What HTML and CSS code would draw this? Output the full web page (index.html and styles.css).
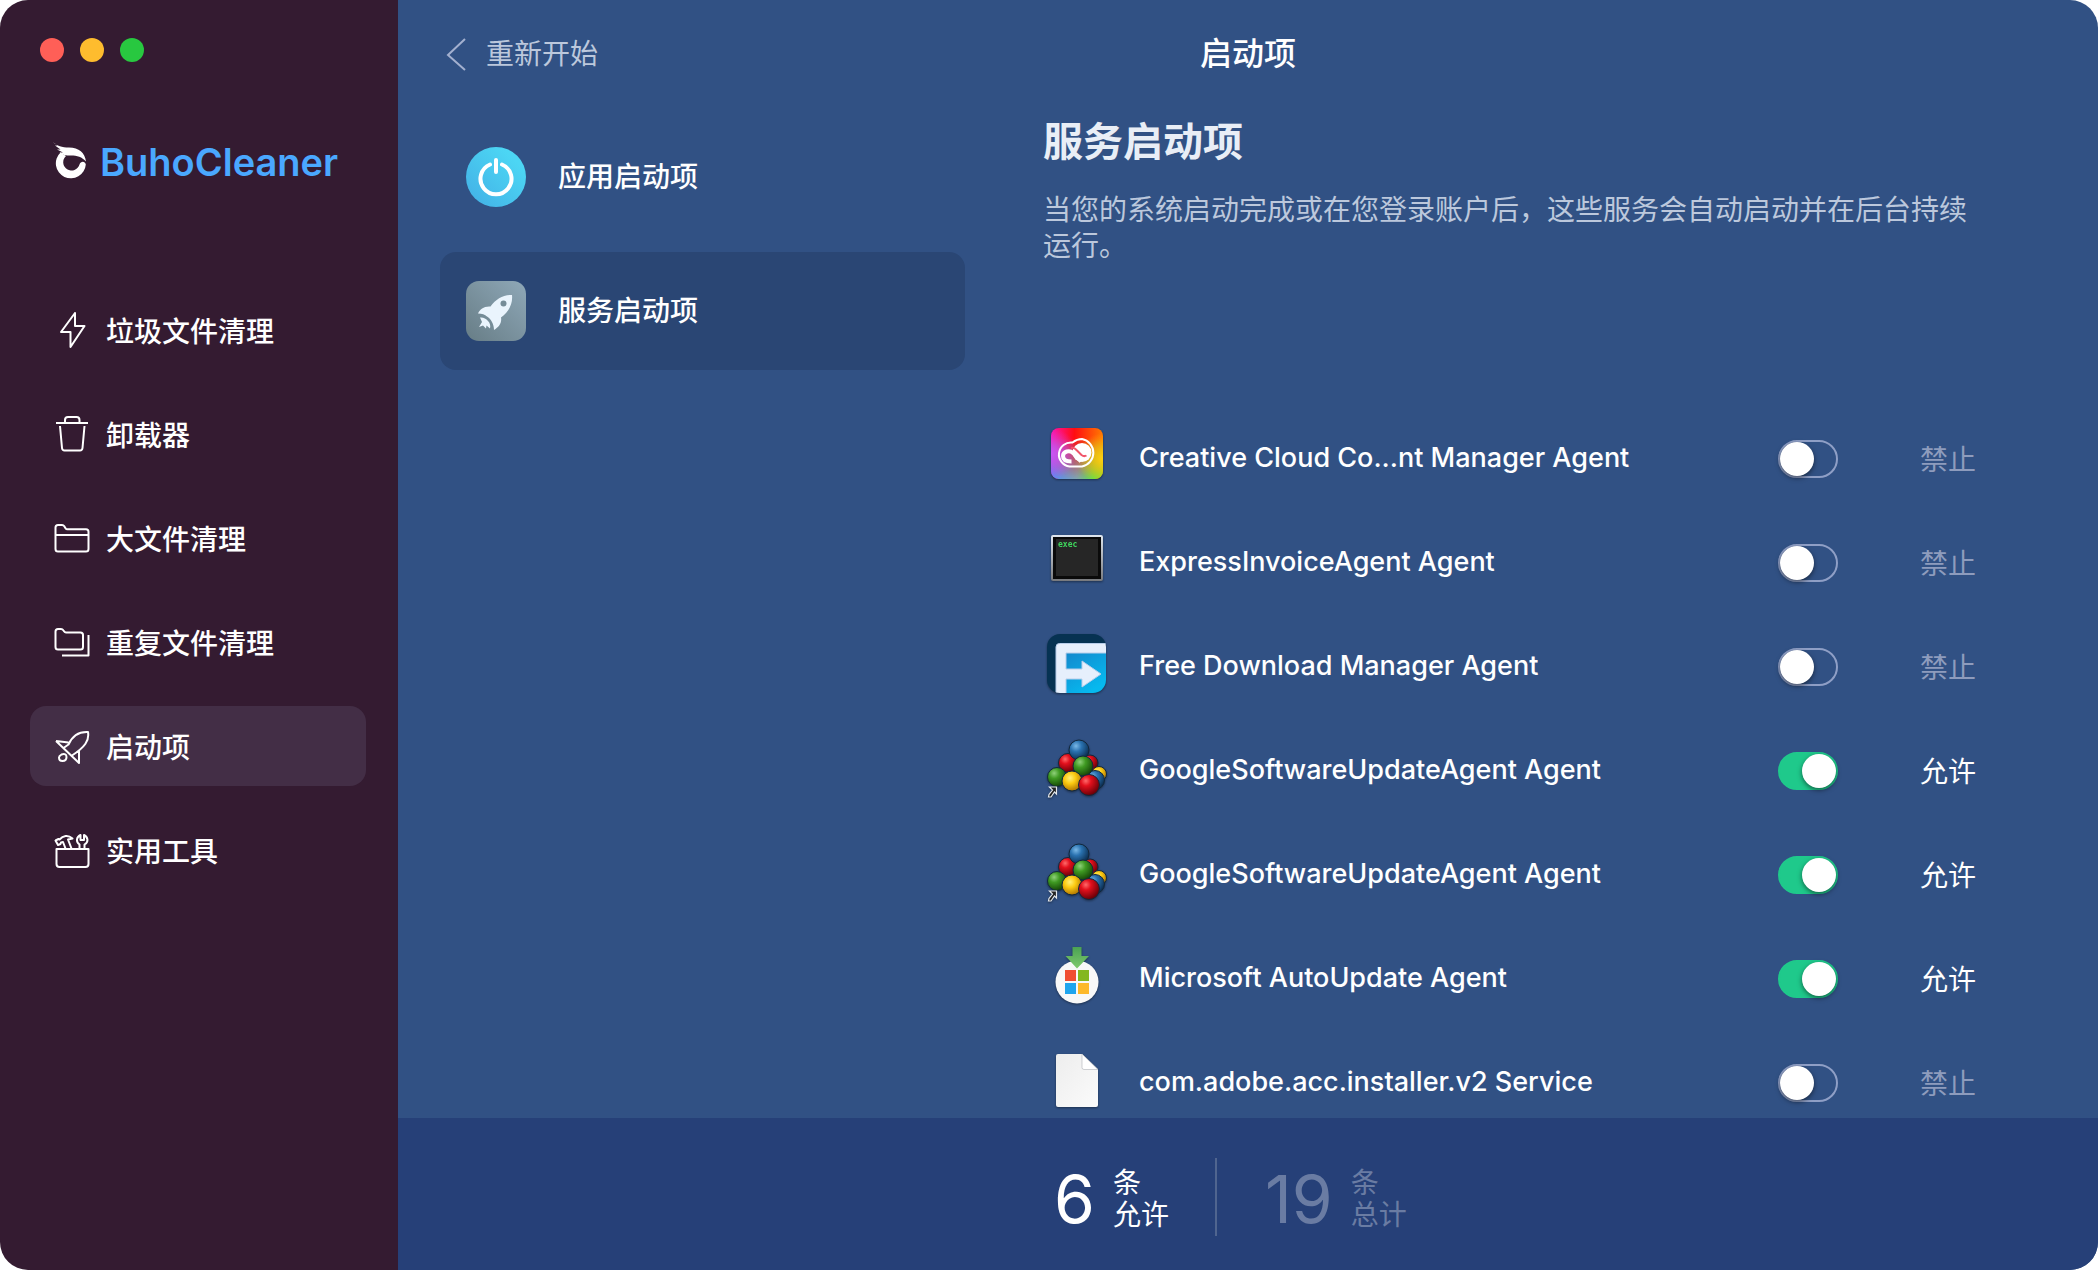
FILE: index.html
```
<!DOCTYPE html>
<html lang="zh-CN">

<head>
  <meta charset="UTF-8">
  <meta name="viewport" content="width=device-width, initial-scale=1.0">
  <title>BuhoCleaner</title>
  <link rel="stylesheet" href="styles.css">
</head>

<body>
  <!-- 图标 -->
  <svg class="sprite" aria-hidden="true">
    <defs>
      <linearGradient id="g-power" x1="1" y1="0" x2="0" y2="1">
        <stop offset="0.2" stop-color="#4cd6f4" />
        <stop offset="1" stop-color="#42aee5" />
      </linearGradient>
      <linearGradient id="g-service" x1="1" y1="0" x2="0" y2="1">
        <stop offset="0" stop-color="#8fa8b8" />
        <stop offset="1" stop-color="#677d86" />
      </linearGradient>
      <radialGradient id="g-red" cx="0.35" cy="0.3" r="0.7">
        <stop offset="0" stop-color="#ff6a6a" />
        <stop offset="0.35" stop-color="#e3101c" />
        <stop offset="1" stop-color="#6d0008" />
      </radialGradient>
      <radialGradient id="g-green" cx="0.35" cy="0.3" r="0.7">
        <stop offset="0" stop-color="#8fd07a" />
        <stop offset="0.4" stop-color="#3f9a22" />
        <stop offset="1" stop-color="#174a08" />
      </radialGradient>
      <radialGradient id="g-blue" cx="0.35" cy="0.3" r="0.7">
        <stop offset="0" stop-color="#7ab8e6" />
        <stop offset="0.4" stop-color="#2a72b0" />
        <stop offset="1" stop-color="#0d3054" />
      </radialGradient>
      <radialGradient id="g-yellow" cx="0.4" cy="0.35" r="0.7">
        <stop offset="0" stop-color="#fff07a" />
        <stop offset="0.4" stop-color="#fccb12" />
        <stop offset="1" stop-color="#a86c00" />
      </radialGradient>
      <linearGradient id="g-frame" x1="0" y1="0" x2="0" y2="1">
        <stop offset="0" stop-color="#dfe6ee" />
        <stop offset="1" stop-color="#77797d" />
      </linearGradient>
      <linearGradient id="g-fdm" x1="0" y1="0" x2="0.6" y2="1">
        <stop offset="0" stop-color="#1681c8" />
        <stop offset="1" stop-color="#06b9ef" />
      </linearGradient>
      <linearGradient id="g-arrow" x1="0" y1="0" x2="0" y2="1">
        <stop offset="0" stop-color="#4aa253" />
        <stop offset="1" stop-color="#7fca6c" />
      </linearGradient>
      <linearGradient id="g-paper" x1="0" y1="0" x2="1" y2="1">
        <stop offset="0" stop-color="#ededed" />
        <stop offset="1" stop-color="#fbfbfb" />
      </linearGradient>
      <linearGradient id="g-cc" x1="0" y1="0" x2="1" y2="0">
        <stop offset="0" stop-color="#ff12b0" />
        <stop offset="0.45" stop-color="#ff0c12" />
        <stop offset="1" stop-color="#ff7a00" />
      </linearGradient>
      <linearGradient id="g-cc-low" x1="0" y1="0" x2="1" y2="0">
        <stop offset="0" stop-color="#4f8dff" />
        <stop offset="0.5" stop-color="#7fa6b0" />
        <stop offset="0.8" stop-color="#5ee04a" />
        <stop offset="1" stop-color="#7be02c" />
      </linearGradient>
      <linearGradient id="g-fade" x1="0" y1="0" x2="0" y2="1">
        <stop offset="0.2" stop-color="#000" />
        <stop offset="1" stop-color="#fff" />
      </linearGradient>
      <radialGradient id="g-cc-left" cx="0" cy="0.5" r="0.5">
        <stop offset="0" stop-color="#c956f4" />
        <stop offset="1" stop-color="#c956f4" stop-opacity="0" />
      </radialGradient>
      <radialGradient id="g-cc-right" cx="1" cy="0.6" r="0.5">
        <stop offset="0" stop-color="#ffcf10" />
        <stop offset="1" stop-color="#ffcf10" stop-opacity="0" />
      </radialGradient>
      <mask id="m-fade">
        <rect x="4" y="2" width="52" height="51" fill="url(#g-fade)" />
      </mask>
      <clipPath id="c-fdm">
        <rect width="59" height="59" rx="13" />
      </clipPath>
    </defs>

    <symbol id="app-google" viewBox="-2 0 64 64">
      <g stroke="#12283c" stroke-width="1">
        <circle cx="43" cy="25" r="8" fill="url(#g-red)" />
        <circle cx="52" cy="36" r="7.5" fill="url(#g-yellow)" />
        <circle cx="48" cy="42" r="9.5" fill="url(#g-blue)" />
        <circle cx="21" cy="25" r="9.5" fill="url(#g-red)" />
        <circle cx="32" cy="12" r="10" fill="url(#g-blue)" />
        <circle cx="36" cy="28" r="10" fill="url(#g-green)" />
        <circle cx="10" cy="39" r="9.5" fill="url(#g-green)" />
        <circle cx="25" cy="43" r="10" fill="url(#g-yellow)" />
        <circle cx="42" cy="47" r="10.5" fill="url(#g-red)" />
      </g>
      <path d="M2.500 49H9.500v7l-2-2-3.500 5H1.500l.5-2.500 3.500-4.500z" fill="#222" stroke="#e4e8ec" stroke-width="1.200" />
    </symbol>
  </svg>

  <div class="window">
    <aside class="sidebar">
      <div class="lights">
        <button class="light red" aria-label="关闭"></button>
        <button class="light yellow" aria-label="最小化"></button>
        <button class="light green" aria-label="缩放"></button>
      </div>

      <div class="logo">
        <svg viewBox="0 0 40 40" fill="#fff">
          <path d="M8.500 10.500A15 15 0 1 0 33.800 22.500C33 18.500 28.500 19 27.500 22.500A8.300 8.300 0 1 1 14 14z" />
          <path d="M1 0C5 4 10 5.500 17 5.500 27 5.500 33 11 34 19.500 30 15 25 13.500 19 13.500 14 13.500 10 13 7.500 10.500H11L5 7.500H8.500L3 3.500H5.500z" />
        </svg>
        <span>BuhoCleaner</span>
      </div>

      <nav class="menu">
        <a href="#" class="menu-item">
          <svg class="icon" viewBox="0 0 40 40"><path d="M23 1v13h9.500L18.500 35V20H9z" /></svg>
          垃圾文件清理
        </a>
        <a href="#" class="menu-item">
          <svg class="icon" viewBox="0 0 40 40"><path d="M4 7h32M13 7V4q0-3 3-3h8.500q3 0 3 3v3M8 10l2 22q.3 2.500 2.500 2.500h15.500q2.200 0 2.500-2.500l2-22" /></svg>
          卸载器
        </a>
        <a href="#" class="menu-item">
          <svg class="icon" viewBox="0 0 40 40"><path d="M3.500 7.500q0-2.500 2.500-2.500h4q1.500 0 2.300 1.300l1.200 1.900q.7 1.100 2 1.100h18.500q2.500 0 2.500 2.500V29q0 2.500-2.500 2.500H6q-2.500 0-2.500-2.500zM3.500 15h33" /></svg>
          大文件清理
        </a>
        <a href="#" class="menu-item">
          <svg class="icon" viewBox="0 0 40 40"><path d="M3.500 7.500q0-2.500 2.500-2.500h3q1.500 0 2.300 1.200l.7 1q.8 1.200 2 1.200h14.500q2.500 0 2.500 2.500V23q0 2.500-2.500 2.500H6q-2.500 0-2.500-2.500zM36.500 11v20.500H10" /></svg>
          重复文件清理
        </a>
        <a href="#" class="menu-item active">
          <svg class="icon" viewBox="0 0 40 40"><path d="M4 13l23 22V22.500M4 13l12.500 1.500M11.500 20l5-3.500C20 8.500 27 3.500 36 4 37.500 12.500 33 19 20 27.500M9.500 26.500q5-1.500 5 2.500 0 4-4 4-3.500 0-3.500-3.500 0-1.500 2.500-3z" /></svg>
          启动项
        </a>
        <a href="#" class="menu-item">
          <svg class="icon" viewBox="0 0 40 40"><path d="M4.500 17h32v15q0 3-3 3h-26q-3 0-3-3zM13.500 16.500l-2.500-6.500-2 .5-.5 1.500-2.500 1-2.500-4.500 3-1.500 1 .5C11 3.500 16 2.500 20.500 6.500l-4.500 1 3.500 9M27.500 16.500v-4c-4-3-3-7.500 1-9.500v5h3.500V3c4 2 5 7 .5 9.500v4" /></svg>
          实用工具
        </a>
      </nav>
    </aside>

    <main class="main">
      <header class="topbar">
        <button class="back">
          <svg viewBox="0 0 20 40"><path d="M19 5L2 21l17 15" /></svg>
          重新开始
        </button>
        <h1>启动项</h1>
      </header>

      <div class="content">
        <div class="types">
          <button class="type">
            <svg viewBox="0 0 60 60">
              <circle cx="30" cy="30" r="30" fill="url(#g-power)" />
              <path d="M24 17.500a15.500 15.500 0 1 0 12 0M30 13v12" fill="none" stroke="#fff" stroke-width="4" stroke-linecap="round" />
            </svg>
            应用启动项
          </button>
          <button class="type active">
            <svg viewBox="0 0 60 60">
              <rect width="60" height="60" rx="13" fill="url(#g-service)" />
              <path d="M46 14C37 13.500 30 18 24.500 25.500 18 25 14 28 12 32.500 16 32.500 19 33.500 21 35.500 25 38 28 43 28 49 33 46 36 42 35 36.500 42.500 31 47 23 46 14z" fill="#eaf4fd" />
              <circle cx="37.500" cy="22.500" r="3" fill="#768c98" />
              <path d="M14 36.500q5-.5 8 3.500 3 3 2 7.500l-3.500-3-.5 3-3-3-4 1.500 3-5z" fill="#eaf4fd" />
            </svg>
            服务启动项
          </button>
        </div>

        <section class="detail">
          <h2>服务启动项</h2>
          <p class="desc">当您的系统启动完成或在您登录账户后，这些服务会自动启动并在后台持续运行。</p>

          <ul class="list">
            <li class="row">
              <svg class="app" viewBox="-2 0 64 64">
                <rect x="4" y="2" width="52" height="51" rx="8" fill="url(#g-cc)" />
                <rect x="4" y="2" width="52" height="51" rx="8" fill="url(#g-cc-low)" mask="url(#m-fade)" />
                <rect x="4" y="2" width="52" height="51" rx="8" fill="url(#g-cc-left)" />
                <rect x="4" y="2" width="52" height="51" rx="8" fill="url(#g-cc-right)" />
                <path d="M22.500 40.500A12 12 0 1 1 25.500 16.500Q30 13 35 13A14 14 0 0 1 35 40.500z" fill="none" stroke="#fff" stroke-width="2" />
                <circle cx="35" cy="26.500" r="9.500" fill="#fff" />
                <path d="M34 35.500l-8-8.500c-3.500-3.500-10-1.500-10 3 0 4 3.500 5.500 8.500 5.500" fill="none" stroke="#fff" stroke-width="4" />
                <path d="M24 22q3-1 5.500 2l5 5q2.500 2 5 .5" fill="none" stroke="#f0566a" stroke-width="2" />
              </svg>
              <label class="name" for="s1">Creative Cloud Co...nt Manager Agent</label>
              <input type="checkbox" class="switch" id="s1">
              <span class="status">禁止</span>
            </li>
            <li class="row">
              <svg class="app" viewBox="-2 0 64 64">
                <rect x="4" y="5" width="52" height="46" rx="2" fill="url(#g-frame)" />
                <rect x="6" y="7" width="48" height="42" fill="#0a0a0a" />
                <rect x="9" y="9" width="42" height="37" fill="#262626" />
                <text x="11" y="17" class="exec">exec</text>
              </svg>
              <label class="name" for="s2">ExpressInvoiceAgent Agent</label>
              <input type="checkbox" class="switch" id="s2">
              <span class="status">禁止</span>
            </li>
            <li class="row">
              <svg class="app" viewBox="-2 0 64 64">
                <g clip-path="url(#c-fdm)">
                  <rect width="59" height="59" fill="#063252" />
                  <path d="M14 14h45v45H14z" fill="url(#g-fdm)" />
                  <path d="M9 60V13q0-3.500 3.500-3.500H60V19H19v16h16v-8l19 13-19 13v-8H19v15z" fill="#e6effc" stroke="#b8cdea" />
                </g>
              </svg>
              <label class="name" for="s3">Free Download Manager Agent</label>
              <input type="checkbox" class="switch" id="s3">
              <span class="status">禁止</span>
            </li>
            <li class="row">
              <svg class="app"><use href="#app-google" /></svg>
              <label class="name" for="s4">GoogleSoftwareUpdateAgent Agent</label>
              <input type="checkbox" class="switch" id="s4" checked>
              <span class="status on">允许</span>
            </li>
            <li class="row">
              <svg class="app"><use href="#app-google" /></svg>
              <label class="name" for="s5">GoogleSoftwareUpdateAgent Agent</label>
              <input type="checkbox" class="switch" id="s5" checked>
              <span class="status on">允许</span>
            </li>
            <li class="row">
              <svg class="app" viewBox="-2 0 64 64">
                <circle cx="30" cy="36" r="21.500" fill="#f8f8f8" />
                <path d="M25.500 1h9v9H42L30 22.500 18.500 10h7z" fill="url(#g-arrow)" />
                <path d="M18 24h11v11H18z" fill="#f04e32" />
                <path d="M31 24h11v11H31z" fill="#83b71f" />
                <path d="M18 37h11v11H18z" fill="#1fa5ee" />
                <path d="M31 37h11v11H31z" fill="#fdb92a" />
              </svg>
              <label class="name" for="s6">Microsoft AutoUpdate Agent</label>
              <input type="checkbox" class="switch" id="s6" checked>
              <span class="status on">允许</span>
            </li>
            <li class="row">
              <svg class="app" viewBox="-2 0 64 64">
                <path d="M11 4h24l16 15.500V55q0 2-2 2H11q-2 0-2-2V6q0-2 2-2z" fill="url(#g-paper)" />
                <path d="M35 4l16 15.500H37q-2 0-2-2z" fill="#fff" stroke="#b9bcc0" stroke-width="0.700" />
              </svg>
              <label class="name" for="s7">com.adobe.acc.installer.v2 Service</label>
              <input type="checkbox" class="switch" id="s7">
              <span class="status">禁止</span>
            </li>
          </ul>
        </section>
      </div>

      <footer class="summary">
        <div class="count">
          <strong>6</strong>
          <span>条<br>允许</span>
        </div>
        <div class="count total">
          <strong>19</strong>
          <span>条<br>总计</span>
        </div>
      </footer>
    </main>
  </div>

  <script>
    // 切换开关时更新状态文字
    document.querySelector('.list').addEventListener('change', function (e) {
      const status = e.target.parentNode.querySelector('.status')
      status.innerHTML = e.target.checked ? '允许' : '禁止'
      status.classList.toggle('on', e.target.checked)
    })
  </script>
</body>

</html>
```
FILE: styles.css
```
/* 重置默认样式 */
* {
  margin: 0;
  padding: 0;
  box-sizing: border-box;
}

body {
  font-family: Inter, "Noto Sans CJK SC", sans-serif;
  font-size: 28px;
  line-height: 36px;
  color: #fff;
  background-color: #fff;
}

button {
  font: inherit;
  color: inherit;
  background: none;
  border: none;
  cursor: pointer;
}

svg {
  flex: none;
}

.sprite {
  position: absolute;
  width: 0;
  height: 0;
}

.window {
  display: flex;
  height: 100vh;
  border-radius: 28px;
  overflow: hidden;
}

/* 侧边栏 */
.sidebar {
  flex: none;
  width: 398px;
  padding: 38px 30px;
  background-color: #341b31;
}

.lights {
  display: flex;
  gap: 16px;
  padding-left: 10px;
}

.light {
  width: 24px;
  height: 24px;
  border-radius: 50%;
}

.light.red {
  background-color: #ff5f57;
}

.light.yellow {
  background-color: #febc2e;
}

.light.green {
  background-color: #28c840;
}

.logo {
  display: flex;
  align-items: center;
  gap: 8px;
  margin: 80px 0 108px;
  padding-left: 22px;
  font-size: 38px;
  font-weight: 600;
  line-height: 40px;
  color: #4aa8ff;
}

.logo svg {
  width: 40px;
  height: 40px;
}

.menu {
  display: flex;
  flex-direction: column;
  gap: 24px;
}

.menu-item {
  display: flex;
  align-items: center;
  gap: 14px;
  width: 336px;
  height: 80px;
  padding: 4px 0 0 22px;
  border-radius: 16px;
  font-weight: 500;
  color: #fff;
  text-decoration: none;
}

.menu-item.active {
  background-color: #432e46;
}

.icon {
  width: 40px;
  height: 40px;
  fill: none;
  stroke: #fff;
  stroke-width: 2;
  stroke-linejoin: round;
}

/* 主区域 */
.main {
  display: flex;
  flex: 1;
  flex-direction: column;
  min-width: 0;
  background-color: #315184;
}

.topbar {
  display: grid;
  grid-template-columns: 1fr auto 1fr;
  align-items: center;
  flex: none;
  height: 108px;
  padding: 0 48px;
}

.topbar h1 {
  font-size: 32px;
  font-weight: 500;
}

.back {
  display: flex;
  align-items: center;
  gap: 20px;
  justify-self: start;
  color: #bcc8dc;
}

.back svg {
  width: 20px;
  height: 40px;
  fill: none;
  stroke: #a3b0cf;
  stroke-width: 2;
}

.content {
  display: flex;
  flex: 1;
  gap: 78px;
  min-height: 0;
  padding: 10px 112px 0 42px;
}

.types {
  display: flex;
  flex: none;
  flex-direction: column;
  gap: 16px;
  width: 525px;
}

.type {
  display: flex;
  align-items: center;
  gap: 32px;
  height: 118px;
  padding: 0 26px;
  border-radius: 16px;
  font-weight: 500;
}

.type.active {
  background-color: #2a4674;
}

.type svg {
  width: 60px;
  height: 60px;
}

.detail {
  display: flex;
  flex: 1;
  flex-direction: column;
  min-width: 0;
}

.detail h2 {
  font-size: 40px;
  line-height: 48px;
  color: #e9eef6;
}

.desc {
  height: 214px;
  margin-top: 26px;
  color: #bcc8dc;
}

.list {
  flex: 1;
  min-height: 0;
  overflow: hidden;
  list-style: none;
}

.row {
  display: flex;
  align-items: center;
  height: 104px;
  padding-left: 2px;
}

.app {
  width: 64px;
  height: 64px;
  filter: drop-shadow(0 1px 1px rgba(0, 0, 0, 0.4));
}

.exec {
  font-family: "DejaVu Sans Mono", monospace;
  font-size: 8px;
  font-weight: bold;
  fill: #3fd45c;
}

.name {
  flex: 1;
  padding-left: 30px;
  font-size: 27px;
  font-weight: 500;
}

.switch {
  appearance: none;
  width: 60px;
  height: 38px;
  margin: 2px 82px 0 0;
  border: 2px solid #8f9fc6;
  border-radius: 19px;
  cursor: pointer;
}

.switch::before {
  content: "";
  display: block;
  width: 34px;
  height: 34px;
  border-radius: 50%;
  background-color: #fff;
  box-shadow: 0 2px 5px rgba(0, 0, 0, 0.5);
}

.switch:checked {
  padding-left: 22px;
  border-color: #1fc98b;
  background-color: #1fc98b;
}

.status {
  width: 66px;
  margin-top: 4px;
  color: #8e9cbd;
}

.status.on {
  color: #fff;
}

/* 底部统计 */
.summary {
  display: flex;
  align-items: center;
  flex: none;
  height: 152px;
  padding: 6px 0 0 656px;
  background-color: #264078;
}

.count {
  display: flex;
  align-items: center;
  gap: 18px;
  height: 78px;
  padding-top: 4px;
  line-height: 32px;
}

.count strong {
  font-size: 66px;
  font-weight: 400;
}

.total {
  margin-left: 46px;
  padding-left: 48px;
  border-left: 2px solid #50658f;
  color: #6a7ca3;
}
```
